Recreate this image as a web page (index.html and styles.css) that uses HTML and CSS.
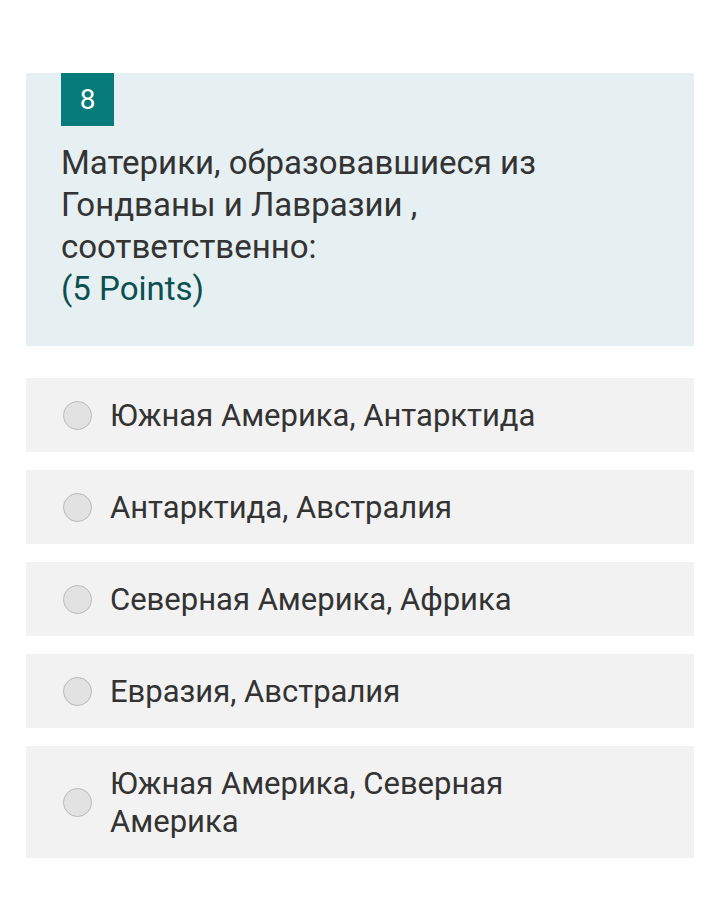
FILE: index.html
```html
<!DOCTYPE html>
<html lang="ru">
<head>
    <meta charset="UTF-8">
    <meta name="viewport" content="width=device-width, initial-scale=1.0">
    <title>Вопрос 8</title>
    <link rel="stylesheet" href="styles.css">
</head>
<body>
    <div class="question">
        <div class="q-number">8</div>
        <div class="q-title">
            Материки, образовавшиеся из Гондваны и Лавразии , соответственно:
            <span class="q-points">(5 Points)</span>
        </div>
    </div>

    <div class="choices">
        <label class="choice">
            <input type="radio" name="q8">
            <span class="radio"></span>
            <span class="choice-text">Южная Америка, Антарктида</span>
        </label>
        <label class="choice">
            <input type="radio" name="q8">
            <span class="radio"></span>
            <span class="choice-text">Антарктида, Австралия</span>
        </label>
        <label class="choice">
            <input type="radio" name="q8">
            <span class="radio"></span>
            <span class="choice-text">Северная Америка, Африка</span>
        </label>
        <label class="choice">
            <input type="radio" name="q8">
            <span class="radio"></span>
            <span class="choice-text">Евразия, Австралия</span>
        </label>
        <label class="choice">
            <input type="radio" name="q8">
            <span class="radio"></span>
            <span class="choice-text">Южная Америка, Северная Америка</span>
        </label>
    </div>
</body>
</html>
```

FILE: styles.css
```css
body {
    margin: 0;
    padding: 73px 26px 40px;
    background: #fff;
    font-family: Roboto, "Noto Sans", sans-serif;
    color: #333;
}
.question {
    background: #e6eff1;
    padding: 0 35px 36px;
}
.q-number {
    width: 53px;
    height: 53px;
    background: #077a7a;
    color: #fff;
    font-size: 28px;
    display: flex;
    align-items: center;
    justify-content: center;
}
.q-title {
    margin-top: 16px;
    font-size: 33px;
    line-height: 42px;
}
.q-points {
    display: block;
    color: #0b5050;
}
.choices {
    display: flex;
    flex-direction: column;
    gap: 18px;
    margin-top: 32px;
}
.choice {
    background: #f2f2f2;
    display: flex;
    align-items: center;
    padding: 17px 20px 17px 37px;
    min-height: 40px;
    cursor: pointer;
}
.choice input {
    display: none;
}
.radio {
    width: 27px;
    height: 27px;
    flex: none;
    border-radius: 50%;
    border: 1px solid #b8b8b8;
    background: #e2e2e2;
    margin-right: 18px;
}
.choice-text {
    font-size: 31px;
    line-height: 38px;
    max-width: 480px;
    margin-top: 2px;
}
```
